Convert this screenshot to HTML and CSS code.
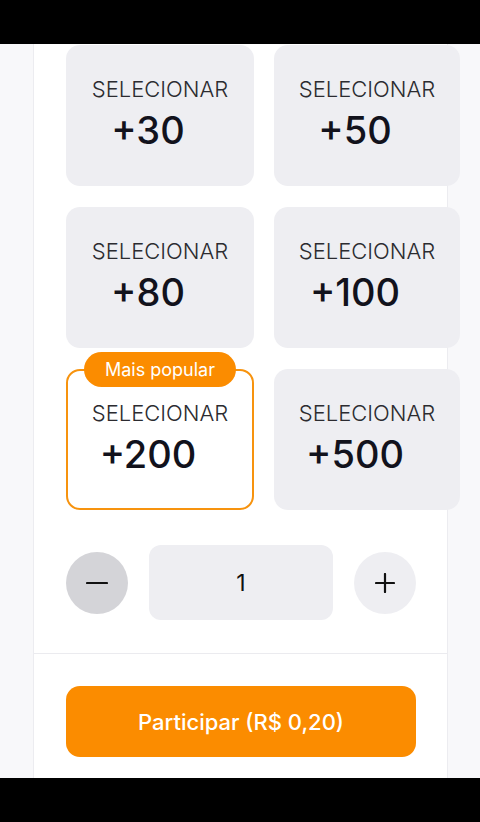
FILE: index.html
```html
<!DOCTYPE html>
<html lang="pt-BR">
<head>
  <meta charset="UTF-8">
  <meta name="viewport" content="width=device-width, initial-scale=1.0">
  <title>Selecionar cotas</title>
  <link rel="stylesheet" href="styles.css">
</head>
<body>
  <div class="bar-top"></div>
  <div class="screen">
    <div class="side"></div>
    <div class="panel">
      <div class="options">
        <div class="option">
          <span class="label">SELECIONAR</span>
          <span class="amount">+30</span>
        </div>
        <div class="option">
          <span class="label">SELECIONAR</span>
          <span class="amount">+50</span>
        </div>
        <div class="option">
          <span class="label">SELECIONAR</span>
          <span class="amount">+80</span>
        </div>
        <div class="option">
          <span class="label">SELECIONAR</span>
          <span class="amount">+100</span>
        </div>
        <div class="option popular">
          <span class="badge">Mais popular</span>
          <span class="label">SELECIONAR</span>
          <span class="amount">+200</span>
        </div>
        <div class="option">
          <span class="label">SELECIONAR</span>
          <span class="amount">+500</span>
        </div>
      </div>
      <div class="stepper">
        <button class="step minus" aria-label="Diminuir">
          <svg width="22" height="22" viewBox="0 0 22 22"><path d="M1 11h20" stroke="#111" stroke-width="2.2" stroke-linecap="round"/></svg>
        </button>
        <div class="qty">1</div>
        <button class="step plus" aria-label="Aumentar">
          <svg width="20" height="20" viewBox="0 0 20 20"><path d="M1 10h18M10 1v18" stroke="#111" stroke-width="2.2" stroke-linecap="round"/></svg>
        </button>
      </div>
      <div class="divider"></div>
      <div class="action">
        <button class="join">Participar (R$ 0,20)</button>
      </div>
    </div>
    <div class="side"></div>
  </div>
  <div class="bar-bottom"></div>
</body>
</html>
```

FILE: styles.css
```css
body {
  margin: 0;
  padding: 0;
  font-family: Inter, "Liberation Sans", Arial, sans-serif;
  background-color: #f8f8fa;
  width: 480px;
  height: 822px;
  overflow: hidden;
  display: flex;
  flex-direction: column;
}
.bar-top {
  height: 44px;
  background-color: #000;
  flex: none;
  position: relative;
  z-index: 2;
}
.bar-bottom {
  height: 44px;
  background-color: #000;
  flex: none;
}
.screen {
  flex: 1;
  display: flex;
  min-height: 0;
}
.side {
  width: 33px;
  flex: none;
}
.side:last-child {
  flex: 1;
}
.panel {
  width: 415px;
  flex: none;
  background-color: #fff;
  border-left: 1px solid #ececf0;
  border-right: 1px solid #ececf0;
  padding-top: 1px;
  box-sizing: border-box;
}
.options {
  display: grid;
  grid-template-columns: 188px 186px;
  column-gap: 20px;
  row-gap: 21px;
  margin-left: 32px;
  width: 394px;
  position: relative;
  z-index: 1;
}
.option {
  position: relative;
  height: 141px;
  box-sizing: border-box;
  background-color: #eeeef2;
  border-radius: 14px;
  padding-top: 31px;
  display: flex;
  flex-direction: column;
  align-items: center;
}
.option.popular {
  background-color: #fff;
  border: 2px solid #f7930e;
  padding-top: 29px;
}
.label {
  font-size: 22px;
  line-height: 26px;
  color: #2b2b30;
  font-weight: 300;
}
.amount {
  margin-top: 6px;
  font-size: 38px;
  line-height: 44px;
  font-weight: 500;
  color: #12121c;
  padding-right: 24px;
}
.badge {
  position: absolute;
  top: -19px;
  left: 50%;
  transform: translateX(-50%);
  background-color: #fb8c00;
  color: #fff;
  font-size: 18px;
  line-height: 35px;
  padding: 0 21px;
  border-radius: 18px;
  white-space: nowrap;
}
.stepper {
  display: flex;
  align-items: center;
  margin: 35px 0 0 32px;
  width: 350px;
  justify-content: space-between;
}
.step {
  width: 62px;
  height: 62px;
  border-radius: 50%;
  border: none;
  background-color: #eeeef2;
  padding: 0;
  display: flex;
  align-items: center;
  justify-content: center;
}
.step.minus {
  background-color: #d4d4d8;
}
.qty {
  width: 184px;
  height: 75px;
  border-radius: 12px;
  background-color: #eeeef2;
  display: flex;
  align-items: center;
  justify-content: center;
  font-size: 23px;
  color: #111;
}
.divider {
  margin-top: 33px;
  height: 1px;
  background-color: #ebebef;
}
.action {
  padding: 32px 0 0 32px;
}
.join {
  width: 350px;
  height: 71px;
  border: none;
  border-radius: 14px;
  background-color: #fb8c00;
  color: #fff;
  font-family: inherit;
  font-size: 22px;
  font-weight: 500;
}
```
